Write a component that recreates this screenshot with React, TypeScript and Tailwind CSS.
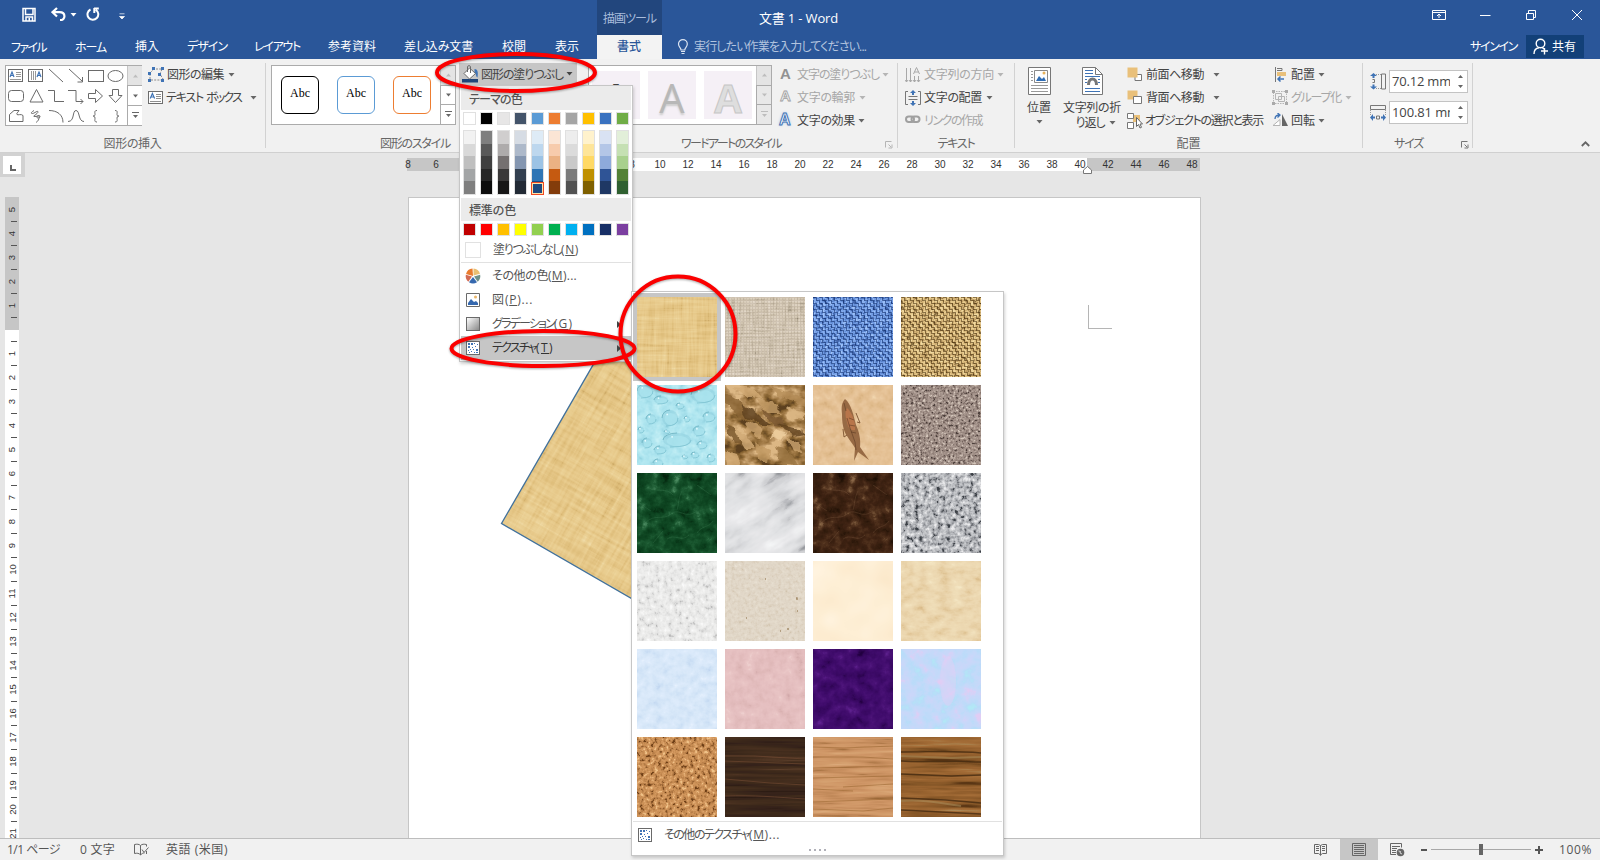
import React, { useLayoutEffect, useRef } from "react";

/* Text that is tracked so that it fills the width given by its class. */
function Label({ className = "", children }: { className?: string; children: React.ReactNode }) {
  const box = useRef<HTMLSpanElement>(null);
  const inner = useRef<HTMLSpanElement>(null);
  useLayoutEffect(() => {
    const b = box.current;
    const i = inner.current;
    if (!b || !i) return;
    i.style.letterSpacing = "0px";
    const n = (i.textContent || "").length;
    const extra = b.getBoundingClientRect().width - i.getBoundingClientRect().width;
    i.style.letterSpacing = `${extra / n}px`;
  }, []);
  return (
    <span ref={box} className={`inline-block shrink-0 whitespace-nowrap leading-[16px] ${className}`}>
      <span ref={inner} className="inline-block">{children}</span>
    </span>
  );
}

function Caret({ className = "text-[#666]" }: { className?: string }) {
  return (
    <svg width="7" height="4" viewBox="0 0 7 4" className={`shrink-0 ${className}`}>
      <path d="M0.500 0h6L3.500 3.500z" fill="currentColor" />
    </svg>
  );
}

/* ---------- textures ---------- */
type Tex = {
  f: string; g?: string; oct?: number; seed: number; k: number; ramp: string[];
};

function channel(ramp: string[], c: number) {
  return ramp.map((h) => (parseInt(h.slice(1 + c * 2, 3 + c * 2), 16) / 255).toFixed(3)).join(" ");
}

function NoiseFilter({ id, t }: { id: string; t: Tex }) {
  const shift = 0.5 - 0.5 * t.k;
  const row = `${t.k} 0 0 0 ${shift}`;
  return (
    <filter id={id} x="0" y="0" width="100%" height="100%" colorInterpolationFilters="sRGB">
      <feTurbulence type="fractalNoise" baseFrequency={t.f} numOctaves={t.oct || 3} seed={t.seed} result="n" />
      <feColorMatrix in="n" type="matrix" values="1 0 0 0 0 1 0 0 0 0 1 0 0 0 0 0 0 0 0 1" result="a" />
      {t.g ? (
        <>
          <feTurbulence type="fractalNoise" baseFrequency={t.g} numOctaves={t.oct || 3} seed={t.seed + 7} />
          <feColorMatrix type="matrix" values="1 0 0 0 0 1 0 0 0 0 1 0 0 0 0 0 0 0 0 1" result="b" />
          <feComposite in="a" in2="b" operator="arithmetic" k1="0" k2="0.5" k3="0.5" k4="0" result="c" />
        </>
      ) : null}
      <feColorMatrix type="matrix" values={`${row} ${row} ${row} 0 0 0 0 1`} />
      <feComponentTransfer>
        <feFuncR type="table" tableValues={channel(t.ramp, 0)} />
        <feFuncG type="table" tableValues={channel(t.ramp, 1)} />
        <feFuncB type="table" tableValues={channel(t.ramp, 2)} />
      </feComponentTransfer>
    </filter>
  );
}

const papyrus: Tex = { f: "0.02 0.3", g: "0.3 0.02", seed: 3, k: 1.5, ramp: ["#c39f5c", "#debd7a", "#e7c98a", "#ecd297", "#f3e0b0"] };

const textures: Tex[] = [
  papyrus,
  { f: "0.05 0.5", g: "0.5 0.05", seed: 5, k: 1.5, ramp: ["#8f8573", "#c4b8a3", "#d8ccb9", "#e0d5c5", "#ece4d6"] },
  { f: "0.3 0.4", g: "0.4 0.3", seed: 9, k: 3, ramp: ["#2a4c94", "#4c78c6", "#6893de", "#7fa8ec", "#a0c4fb"] },
  { f: "0.3 0.4", g: "0.4 0.3", seed: 12, k: 3, ramp: ["#6d5229", "#b38e56", "#d5b373", "#e4c68a", "#f3dca3"] },
  { f: "0.12", seed: 21, k: 1.3, oct: 3, ramp: ["#8ecfdd", "#a3deea", "#afe6f0", "#bbebf3", "#cdf4f8"] },
  { f: "0.05 0.07", seed: 44, k: 2.6, oct: 4, ramp: ["#5c4020", "#83602f", "#a37c48", "#bb9563", "#dcb784"] },
  { f: "0.12", seed: 2, k: 1.1, ramp: ["#d0a777", "#dfba8a", "#e5c195", "#e9c89e", "#f2d7b0"] },
  { f: "0.4", seed: 8, k: 1.9, oct: 2, ramp: ["#4a3e3a", "#8a7972", "#a19088", "#b0a097", "#d6c9bd"] },
  { f: "0.09", seed: 34, k: 1.4, oct: 5, ramp: ["#04240d", "#0b3f1d", "#114a25", "#1d5b33", "#4a8a5f"] },
  { f: "0.02 0.06", seed: 17, k: 1.6, oct: 5, ramp: ["#8f9297", "#cfd0d3", "#e0e1e3", "#e9e9eb", "#f4f5f6"] },
  { f: "0.09", seed: 34, k: 1.4, oct: 5, ramp: ["#1c0e04", "#341d0e", "#3f2313", "#52331e", "#8a6747"] },
  { f: "0.22", seed: 19, k: 1.9, oct: 3, ramp: ["#3c4046", "#94969b", "#b9bbbf", "#cfd0d3", "#ececee"] },
  { f: "0.22 0.18", seed: 23, k: 1.4, oct: 3, ramp: ["#b5b5b5", "#e0e0df", "#ebebea", "#f1f1f0", "#fbfbfb"] },
  { f: "0.3", seed: 26, k: 1.1, oct: 3, ramp: ["#cbbca4", "#dbcfbd", "#e1d7c8", "#e5dccd", "#eee7dc"] },
  { f: "0.03", seed: 4, k: 1.4, oct: 2, ramp: ["#fbe7c8", "#fdecd0", "#feefd5", "#fff2dc", "#fff5e2"] },
  { f: "0.08 0.13", seed: 6, k: 1.1, oct: 4, ramp: ["#d4b27e", "#e5cca0", "#ecd7b0", "#f0deb9", "#f7ebca"] },
  { f: "0.12", seed: 11, k: 1.1, oct: 4, ramp: ["#bfd5f0", "#cfe2f6", "#d8e8f9", "#deecfc", "#eef6ff"] },
  { f: "0.1", seed: 13, k: 1.2, oct: 4, ramp: ["#cda3a5", "#dfb8b8", "#e5bfc0", "#e9c5c5", "#f2d8d6"] },
  { f: "0.09", seed: 15, k: 1.2, oct: 4, ramp: ["#220040", "#370860", "#400c6c", "#4a1276", "#5f2290"] },
  { f: "0.08", seed: 18, k: 1.5, oct: 5, ramp: ["#b2e9f6", "#b9dcf9", "#c3dafa", "#cbd7fa", "#e2cdf4"] },
  { f: "0.28", seed: 22, k: 1.8, oct: 3, ramp: ["#6e3f17", "#b57c46", "#cb9056", "#d69b62", "#f0c288"] },
  { f: "0.008 0.22", seed: 25, k: 1.2, oct: 4, ramp: ["#20130a", "#35221a", "#3e2a1b", "#48301f", "#6a4933"] },
  { f: "0.02 0.22", seed: 27, k: 1.2, oct: 3, ramp: ["#91602f", "#c08858", "#cf9666", "#d5a06f", "#e0b082"] },
  { f: "0.01 0.16", seed: 40, k: 1.6, oct: 4, ramp: ["#5a3615", "#835526", "#97622f", "#a56e38", "#ab8a58"] },
];

const drops: number[][] = [
  [33, 33, 8, 8], [40, 55, 14, 7], [14, 34, 5, 5], [62, 46, 6, 5], [10, 58, 5, 5], [23, 65, 6, 4], [72, 32, 6, 5], [65, 60, 5, 4],
  [8, 6, 8, 7], [24, 15, 7, 4], [66, 10, 12, 8], [43, 21, 4, 3], [21, 78, 5, 4], [50, 34, 3, 3], [58, 70, 4, 3], [74, 73, 4, 4], [4, 45, 3, 3], [48, 72, 3, 2], [30, 47, 3, 2],
];

const creases: [string, string][] = [
  ["0,8 14,16 26,30 20,34 8,26 0,20", "#8a6535"], ["10,2 30,4 38,14 24,12", "#d3ab75"], ["14,18 30,26 44,40 36,40 22,32", "#5a3d1c"],
  ["30,14 48,20 56,28 40,28", "#c79f69"], ["44,2 64,6 80,14 80,20 60,14", "#b58d59"], ["36,24 56,34 62,42 48,40", "#7b5830"],
  ["48,44 62,48 58,56 46,52", "#efd0a0"], ["22,36 38,44 34,52 18,46", "#cda56f"], ["0,40 14,48 20,62 8,58", "#77542a"],
  ["8,44 22,50 30,64 20,64", "#d2ab77"], ["30,58 44,64 42,78 32,74", "#c29a64"], ["52,38 70,42 80,50 70,52", "#5e411f"],
  ["62,50 74,58 80,70 68,64", "#cda671"], ["50,62 62,66 72,80 58,80", "#9a7442"], ["0,66 12,70 16,80 2,80", "#d6ae78"], ["62,22 80,28 80,36 66,34", "#dab582"],
];

const veins = "M45 18c-4 8-3 13-5 19M8 50c10-10 18-2 26-9s14 6 26-3M10 14c8 6 20 0 26 8M60 60c5-8 12-5 16-12M2 30l12 8M30 66c8-6 14 4 22-4M60 12l14 10M16 70l10-12";

function TextureTile({ index }: { index: number }) {
  const id = `tile-${index}`;
  return (
    <svg width="80" height="80" viewBox="0 0 80 80" className="block">
      <defs>
        <NoiseFilter id={id} t={textures[index]} />
        {(index === 2 || index === 3) && (
          <pattern id={`${id}-w`} width="6" height="6" patternUnits="userSpaceOnUse">
            <path d="M0 0.500h3M3 3.500h3" stroke={index === 2 ? "#16336f" : "#4e3613"} strokeWidth="1" opacity="0.6" />
            <path d="M3.500 0v3M0.500 3v3" stroke={index === 2 ? "#16336f" : "#4e3613"} strokeWidth="1" opacity="0.6" />
            <path d="M0 2h3M5 0v3M2 3v3M3 5h3" stroke={index === 2 ? "#97bdf8" : "#f0d79c"} strokeWidth="1" opacity="0.45" />
          </pattern>
        )}
        {index === 1 && (
          <pattern id={`${id}-w`} width="3" height="3" patternUnits="userSpaceOnUse">
            <path d="M0 0.500h3M0.500 0v3" stroke="#8c806c" strokeWidth="1" opacity="0.18" />
          </pattern>
        )}
        {index === 5 && (
          <filter id={`${id}-b`} x="-10%" y="-10%" width="120%" height="120%">
            <feTurbulence type="fractalNoise" baseFrequency="0.08" numOctaves="3" seed="5" />
            <feDisplacementMap in="SourceGraphic" scale="9" xChannelSelector="R" yChannelSelector="G" />
            <feGaussianBlur stdDeviation="0.600" />
          </filter>
        )}
      </defs>
      {index === 9 ? (
        <g transform="rotate(-32 40 40)">
          <rect x="-30" y="-30" width="140" height="140" filter={`url(#${id})`} />
        </g>
      ) : (
        <rect width="80" height="80" filter={`url(#${id})`} />
      )}
      {index >= 1 && index <= 3 && <rect width="80" height="80" fill={`url(#${id}-w)`} />}
      {index === 4 &&
        drops.map(([x, y, rx, ry], i) => (
          <g key={i}>
            <ellipse cx={x} cy={y} rx={rx} ry={ry} fill="#8fd0de" opacity="0.55" />
            <ellipse cx={x + 0.8} cy={y + 1} rx={rx * 0.8} ry={ry * 0.75} fill="#ace5ef" opacity="0.7" />
            <path d={`M${x - rx} ${y}A${rx} ${ry} 0 0 1 ${x} ${y - ry}`} fill="none" stroke="#6fb4c3" strokeWidth="0.9" />
            <path d={`M${x - rx * 0.5} ${y + ry}Q${x + rx} ${y + ry} ${x + rx} ${y}`} fill="none" stroke="#7cc2d0" strokeWidth="0.800" />
            <circle cx={x - rx * 0.35} cy={y - ry * 0.45} r="0.900" fill="#e4fbff" />
          </g>
        ))}
      {index === 5 && (
        <g filter={`url(#${id}-b)`} opacity="0.8">
          {creases.map(([points, fill]) => (
            <polygon key={points} points={points} fill={fill} />
          ))}
        </g>
      )}
      {index === 6 && (
        <g>
          <path d="M32 14c-3 3-4 8-3 15 0 8 1 16 5 22 3 5 6 8 8 12l-1 13 4-9 11 8-9-13c1-7-1-16-4-22-2-8-5-22-11-26z" fill="#8a5a36" opacity="0.85" />
          <path d="M34 23c5 4 9 15 8 22-4 1-7-2-8-8-2-6-2-11 0-14z" fill="#b8754a" />
          <path d="M31 18l2 8M34 33l3 10 5 14 1 8M36 33l5 2M36 40l6 1M38 47l5 1" stroke="#5c3a22" strokeWidth="0.7" fill="none" opacity="0.8" />
          <path d="M43 28l4 10-3-1M30 44l1 8 3-2" stroke="#7c5230" fill="none" strokeWidth="0.900" />
        </g>
      )}
      {index === 8 && <path d={veins} stroke="#4f9166" strokeWidth="0.6" fill="none" opacity="0.4" />}
      {index === 10 && <path d={veins} stroke="#94704f" strokeWidth="0.6" fill="none" opacity="0.4" />}
      {index === 13 && <path d="M40 18h1M71 37h1v2M72 50h1M21 57h1M55 70h1M62 68h2" stroke="#8c6d45" strokeWidth="1.4" fill="none" opacity="0.7" />}
      {index === 19 && <ellipse cx="47" cy="32" rx="8" ry="25" fill="#e0cff6" opacity="0.5" />}
      {index === 21 && <path d="M0 19h30l50 3M0 24l80 3M0 42l45 4 35 2M0 59c30-1 50 1 80 3" stroke="#6b4630" strokeWidth="0.9" fill="none" opacity="0.8" />}
      {index === 22 && <path d="M0 10l30 1 50-2M0 20h50l30 2M0 31l80-2M0 41l80-2M30 50l50-3M0 52l40 2M0 65l80-3M0 72l50 2 30-3" stroke="#9c6834" strokeWidth="0.900" fill="none" opacity="0.65" />}
      {index === 23 && <path d="M0 15c30 0 50-2 80 1M0 24c25 2 50-1 80 1M0 37l50 2 30-1M0 61l45 2 35 3M0 73l80 4" stroke="#3b230d" strokeWidth="1.4" fill="none" opacity="0.7" />}
      {index === 23 && <path d="M0 19l50 2 30-1M0 64c20-2 40 2 60 5" stroke="#a98f5e" strokeWidth="2" fill="none" opacity="0.5" />}
    </svg>
  );
}

/* ---------- small icons ---------- */
function TextureIcon() {
  return (
    <svg width="14" height="14" viewBox="0 0 14 14" className="shrink-0">
      <rect x="0.5" y="0.5" width="13" height="13" fill="#fff" stroke="#6a6a6a" />
      <path d="M2 2h2v2H2zM5 2h2v2H5zM2 5h2v2H2zM8 2h1v1H8zM11 3h1v1h-1zM6 6h1v1H6zM9 5h1v1H9zM2 9h1v1H2zM4 8h1v1H4zM7 8h1v1H7zM10 8h2v2h-2zM3 11h1v1H3zM5 10h1v1H5zM8 11h1v1H8zM10 11h2v1h-2z" fill="#3f73b5" />
    </svg>
  );
}

function TextBoxIcon() {
  return (
    <svg width="15" height="13" viewBox="0 0 15 13" className="shrink-0">
      <rect x="0.5" y="0.5" width="14" height="12" fill="#fff" stroke="#6d6d6d" />
      <path d="M2.2 7.5L4.4 2.5l2.2 5M3 6h2.8" stroke="#3f73b5" strokeWidth="1.2" fill="none" />
      <path d="M8 3.5h5M8 5.5h5M8 7.5h5M2 10.5h11" stroke="#8f8f8f" />
    </svg>
  );
}

function Launcher({ className = "text-[#777]" }: { className?: string }) {
  return (
    <svg width="8" height="8" viewBox="0 0 8 8" className={`shrink-0 ${className}`}>
      <path d="M0.5 6.5V0.5H6.5M3.5 3.5l2.5 2.5M7 3.5V7H3.5" fill="none" stroke="currentColor" />
    </svg>
  );
}

function GalleryScroll({ disabled = false }: { disabled?: boolean }) {
  const c = disabled ? "#bdbdbd" : "#666";
  return (
    <div className="flex w-[15px] shrink-0 flex-col">
      <div className="flex flex-1 items-center justify-center border-l border-[#c6c6c6] bg-[#e4e4e4]">
        <svg width="7" height="4"><path d="M3.5 0.5L6 3.5H1z" fill="#bdbdbd" /></svg>
      </div>
      <div className={`flex flex-1 items-center justify-center border-l border-t border-[#ababab] ${disabled ? "bg-[#e8e8e8]" : "bg-white"}`}>
        <svg width="7" height="4"><path d="M3.5 3.5L6 0.5H1z" fill={c} /></svg>
      </div>
      <div className={`flex flex-1 items-center justify-center border-l border-t border-[#ababab] ${disabled ? "bg-[#e8e8e8]" : "bg-white"}`}>
        <svg width="7" height="7"><path d="M0 0.5h7" stroke={c} /><path d="M3.5 6L6 3H1z" fill={c} /></svg>
      </div>
    </div>
  );
}

/* ---------- title bar ---------- */
function TitleBar() {
  return (
    <header className="flex h-[59px] w-[1600px] shrink-0 flex-col bg-[#2a5699] text-[12px] text-white">
      <div className="flex h-[35px] shrink-0">
        <div className="flex w-[597px] items-start pt-[7px]">
          <svg width="14" height="15" viewBox="0 0 14 15" className="ml-[22px]">
            <path d="M1 1.5h12v12.500H1zM3.500 1.500v6h7.500v-6M4 14v-4h6.500v4" fill="none" stroke="#fff" strokeWidth="1.5" />
            <path d="M6.500 11h1.500v3H6.500z" fill="#fff" />
          </svg>
          <svg width="15" height="14" viewBox="0 0 15 14" className="ml-[15px]">
            <path d="M6 1L1.500 5.200 6 9.500M2 5.200h6.500c6.500 0 6.500 8 0.500 8" fill="none" stroke="#fff" strokeWidth="2.200" />
          </svg>
          <Caret className="ml-[4px] mt-[6px] text-white" />
          <svg width="14" height="15" viewBox="0 0 14 15" className="ml-[9px]">
            <path d="M4.500 2.500A5.400 5.400 0 1 0 9.800 2.800M8 1.500h4.800M8.300 1v5" fill="none" stroke="#fff" strokeWidth="2" />
          </svg>
          <svg width="6" height="7" viewBox="0 0 6 7" className="ml-[19px] mt-[6px]">
            <path d="M0.500 0.800h5M0.500 3.500h5L3 6z" fill="#fff" stroke="#fff" strokeWidth="0.700" />
          </svg>
        </div>
        <div className="flex w-[65px] items-center bg-[#22467d] pl-[6px] pt-[3px] text-[#a9bcdb]">
          <Label className="w-[53px]">描画ツール</Label>
        </div>
        <div className="flex flex-1 items-center pl-[97px] text-[13px]">
          <Label className="w-[79px]">文書 1 - Word</Label>
        </div>
        <div className="flex w-[168px] pt-[9px]">
          <svg width="14" height="12" viewBox="0 0 14 12"><path d="M0.500 1.500h13v9H0.500zM0.500 3.500h13M7 9V5M5 7l2-2 2 2" fill="none" stroke="#fff" /></svg>
          <svg width="11" height="12" viewBox="0 0 11 12" className="ml-[34px]"><path d="M0 6.500h10.500" stroke="#fff" /></svg>
          <svg width="11" height="12" viewBox="0 0 11 12" className="ml-[35px]"><path d="M0.500 4.500h7v6h-7zM2.500 4V1.500h7v7H8" fill="none" stroke="#fff" /></svg>
          <svg width="12" height="12" viewBox="0 0 12 12" className="ml-[34px]"><path d="M1 1l10 10M11 1L1 11" stroke="#fff" /></svg>
        </div>
      </div>
      <div className="flex h-[24px] items-center">
        <Label className="ml-[11px] w-[35px] pt-px">ファイル</Label>
        <Label className="ml-[29px] w-[31px] pt-px">ホーム</Label>
        <Label className="ml-[29px] w-[24px]">挿入</Label>
        <Label className="ml-[28px] w-[40px]">デザイン</Label>
        <Label className="ml-[27px] w-[46px]">レイアウト</Label>
        <Label className="ml-[28px] w-[48px]">参考資料</Label>
        <Label className="ml-[28px] w-[69px]">差し込み文書</Label>
        <Label className="ml-[29px] w-[24px]">校閲</Label>
        <Label className="ml-[29px] w-[24px]">表示</Label>
        <div className="ml-[18px] flex h-full w-[65px] items-center justify-center bg-[#f3f3f3] pr-px font-medium text-[#2a5699]">
          <Label className="w-[24px]">書式</Label>
        </div>
        <svg width="12" height="16" viewBox="0 0 12 16" className="ml-[15px] mr-[5px] shrink-0">
          <path d="M4 11C4 8.500 1.500 8 1.500 5a4.300 4.300 0 0 1 8.800 0C10.300 8 7.800 8.500 7.800 11zM4 12.500h4M4.500 14.500h3" fill="none" stroke="#dbe4f2" strokeWidth="1.200" />
        </svg>
        <Label className="w-[172px] text-[#b3c4df]">実行したい作業を入力してください...</Label>
        <div className="flex-1" />
        <Label className="w-[47px]">サインイン</Label>
        <div className="ml-[9px] mr-[16px] flex h-[23px] w-[58px] items-center self-start bg-[#124078] pl-[7px]">
          <svg width="16" height="17" viewBox="0 0 16 17" className="mr-[3px]">
            <circle cx="7.500" cy="5.500" r="4.300" fill="none" stroke="#fff" strokeWidth="1.400" />
            <path d="M1 16c0-4 2.500-6 5-6.300M9 9.500c1 0.300 1.500 1 2 1.500M8 13h7M11.500 10v6.500" fill="none" stroke="#fff" strokeWidth="1.400" />
          </svg>
          <Label className="w-[24px]">共有</Label>
        </div>
      </div>
    </header>
  );
}

/* ---------- ribbon ---------- */
function Group({ className, children }: { className: string; children: React.ReactNode }) {
  return <section className={`flex shrink-0 flex-col ${className}`}>{children}</section>;
}
function Body({ children }: { children: React.ReactNode }) {
  return <div className="flex h-[74px] shrink-0 items-start pt-[4px]">{children}</div>;
}
function Sep() {
  return <div className="mt-[4px] h-[85px] w-px shrink-0 bg-[#d2d2d2]" />;
}
const rowCls = "flex h-[23px] items-center";

function ShapeGallery() {
  return (
    <div className="ml-[5px] mt-[2px] flex h-[61px] w-[137px] shrink-0 border border-[#ababab] bg-white">
      <svg width="121" height="59" viewBox="6 66 121 59" className="shrink-0" fill="none" stroke="#6a6a6a">
        <rect x="8.500" y="69.500" width="14" height="12" />
        <path d="M10 77l2-5 2 5M11 75.500h2.500" stroke="#3f73b5" strokeWidth="1.200" />
        <path d="M16 72.500h5M16 74.500h5M16 76.500h5M10 79.500h11" stroke="#999" />
        <rect x="28.500" y="69.500" width="14" height="12" />
        <path d="M31.500 71v9M33.500 71v9M35.500 71v9" stroke="#999" /><path d="M37 77l2-5 2 5M38 75.500h2.500" stroke="#3f73b5" strokeWidth="1.200" />
        <path d="M49 69l14 13M69 69l13 12M82.500 77v5H77.500" />
        <rect x="88.500" y="70.500" width="15" height="11" /><ellipse cx="115.500" cy="76" rx="7.500" ry="5.500" />
        <rect x="8.500" y="90.500" width="15" height="11" rx="3" /><path d="M36.500 89.500l6.500 12.500H30z" />
        <path d="M48 90.500h6.500v11H64M68 90.500h8v11h7M80.500 99l2.500 2.500-2.500 2.500" />
        <path d="M88.500 93.500h7v-4l7 6.500-7 6.500v-4h-7zM112.500 89.500h6v6h3.500l-6.500 7-6.500-7h3.500z" />
        <path d="M9.500 121.500v-7l4.500-4h5c-1 2-3 3-2 4s4-1 6 1v6zM34 110.500c-5 3-2 4 1 2s4-1 2 1-5 3-2 3 5-2 5 0-4 2-3 0 3-1 2 2-2 3-3 4" />
        <path d="M49 110.500c8 0 14 4 14 12M68 121.500c7 0 4-11 8-11s2 11 8 11M97 110.500c-3 0-2 2-2 4s-2 1.500-2 1.500 2 0 2 2-1 4 2 4M115 110.500c3 0 2 2 2 4s2 1.500 2 1.500-2 0-2 2 1 4-2 4" />
      </svg>
      <GalleryScroll />
    </div>
  );
}

function SizeInput({ value, w }: { value: string; w: string }) {
  return (
    <div className="flex h-[23px] w-[79px] items-center border border-[#c3c3c3] bg-white pl-[2px]">
      <div className="w-[58px] overflow-hidden whitespace-nowrap text-[#444]">
        <Label className={`text-[13px] ${w}`}>{value}</Label>
      </div>
      <svg width="7" height="15" viewBox="0 0 7 15" className="ml-[7px] shrink-0"><path d="M3.500 1L6 4H1zM3.500 14L6 11H1z" fill="#666" /></svg>
    </div>
  );
}

function Ribbon() {
  return (
    <div className="flex h-[94px] w-[1600px] shrink-0 border-b border-[#d0d0d0] bg-[#f1f1f1] text-[12px] text-[#444]">
      <Group className="w-[265px]">
        <Body>
          <ShapeGallery />
          <div className="ml-[6px]">
            <div className={rowCls}>
              <svg width="16" height="15" viewBox="0 0 16 15" className="mr-[3px]">
                <path d="M2 12V6l4-4M8 2h6L12 7l3 5M3 13h10" fill="none" stroke="#8a8a8a" strokeDasharray="2 1.200" />
                <path d="M4 0h3v3H4zM13 0h3v3h-3zM0 5h3v3H0zM10 6h3v3h-3zM0 12h3v3H0zM13 12h3v3h-3z" fill="#3f73b5" />
              </svg>
              <Label className="mr-[4px] w-[57px]">図形の編集</Label><Caret />
            </div>
            <div className={rowCls}>
              <TextBoxIcon /><Label className="ml-[3px] w-[37px]">テキスト</Label><Label className="ml-[3px] mr-[9px] w-[35px]">ボックス</Label><Caret />
            </div>
          </div>
        </Body>
        <div className="text-center text-[#666]"><Label className="mt-[3px] w-[58px]">図形の挿入</Label></div>
      </Group>
      <Sep />
      <Group className="w-[322px]">
        <Body>
          <div className="ml-[5px] mt-[2px] flex h-[60px] w-[185px] shrink-0 border border-[#ababab] bg-white">
            <div className="flex flex-1 items-start gap-[18px] pl-[9px] pt-[10px] font-['Liberation_Serif',serif] text-[12px] text-black">
              <div className="flex h-[38px] w-[38px] justify-center rounded-[6px] border border-black pt-[8px] leading-[16px]">Abc</div>
              <div className="flex h-[38px] w-[38px] justify-center rounded-[6px] border border-[#5b9bd5] pt-[8px] leading-[16px]">Abc</div>
              <div className="flex h-[38px] w-[38px] justify-center rounded-[6px] border border-[#ed7d31] pt-[8px] leading-[16px]">Abc</div>
            </div>
            <GalleryScroll />
          </div>
          <div className="ml-[3px] flex h-[22px] w-[118px] items-center bg-[#c6c6c6] pl-[3px]">
            <svg width="17" height="18" viewBox="0 0 17 18" className="mr-[2px]">
              <path d="M0 14h16v3.500H0z" fill="#1f4579" />
              <path d="M12.500 4c4 0 3.500 5 3 8.500-2-1-1-4-3-4.500z" fill="#3f73b5" />
              <path d="M7.500 3l6 5.500-6 5.500L2 8.500z" fill="#fff" stroke="#6a6a6a" /><path d="M5.500 7V1.500c0-1 3-1 3 0V8" fill="none" stroke="#6a6a6a" />
            </svg>
            <Label className="mr-[3px] w-[82px] pt-[2px]">図形の塗りつぶし</Label><Caret className="text-[#444]" />
          </div>
        </Body>
        <Label className="ml-[114px] mt-[3px] w-[70px] text-[#666]">図形のスタイル</Label>
      </Group>
      <Group className="w-[309px]">
        <Body>
          <div className="mt-[2px] flex h-[60px] w-[184px] shrink-0 border border-[#ababab] bg-white">
            <div className="flex flex-1 gap-[8px] pl-[3px] pt-[5px] font-['Open_Sans',sans-serif] text-[40px] leading-[51px]">
              <div className="h-[48px] w-[48px] bg-[#f5f0f6] pt-px text-center font-semibold text-[#444]">A</div>
              <div className="h-[48px] w-[48px] bg-[#f5f0f6] pt-px text-center font-medium text-[#b8b8b8] [text-shadow:0_2px_2px_#ccc]">A</div>
              <div className="h-[48px] w-[48px] bg-[#f5f0f6] pt-px text-center font-bold text-[#dedede] [-webkit-text-stroke:1px_#c6c6c6]">A</div>
            </div>
            <GalleryScroll disabled />
          </div>
          <div className="ml-[6px]">
            <div className={`${rowCls} text-[#a6a6a6]`}>
              <span className="w-[19px] pb-[3px] pl-[2px] font-['Liberation_Sans',sans-serif] text-[15px] font-bold leading-[15px] text-[#929292]">A</span>
              <Label className="mr-[3px] w-[82px]">文字の塗りつぶし</Label><Caret className="text-[#b5b5b5]" />
            </div>
            <div className={`${rowCls} text-[#a6a6a6]`}>
              <span className="w-[19px] pb-[5px] pl-[2px] font-['Liberation_Sans',sans-serif] text-[15px] font-bold leading-[15px] text-[#f1f1f1] [-webkit-text-stroke:0.8px_#a0a0a0]">A</span>
              <Label className="mr-[4px] w-[58px]">文字の輪郭</Label><Caret className="text-[#b5b5b5]" />
            </div>
            <div className={rowCls}>
              <span className="w-[19px] pb-[3px] pl-[1px] font-['Liberation_Sans',sans-serif] text-[16px] font-bold leading-[15px] text-white [-webkit-text-stroke:1px_#3f73b5] [text-shadow:0_0_3px_#8db4e8]">A</span>
              <Label className="mr-[3px] w-[58px]">文字の効果</Label><Caret />
            </div>
          </div>
        </Body>
        <div className="flex items-center text-[#666]"><Label className="ml-[93px] mr-[104px] mt-[3px] w-[100px]">ワードアートのスタイル</Label><Launcher className="mt-[4px] text-[#b5b5b5]" /></div>
      </Group>
      <Sep />
      <Group className="w-[116px]">
        <Body>
          <div className="ml-[7px]">
            <div className={`${rowCls} text-[#a6a6a6]`}>
              <svg width="16" height="16" viewBox="0 0 16 16" className="mr-[3px] shrink-0"><path d="M1.500 1v14M5.500 1v14M9.500 9v6M13.500 9v6M0 13l1.500 2L3 13M4 13l1.500 2L7 13M8 13l1.500 2 1.500-2M12 13l1.500 2 1.500-2M8.500 7L11.500 0.500 14.500 7M9.500 5h4" fill="none" stroke="#a8a8a8" /></svg>
              <Label className="mr-[3px] w-[70px]">文字列の方向</Label><Caret className="text-[#b5b5b5]" />
            </div>
            <div className={rowCls}>
              <svg width="16" height="16" viewBox="0 0 16 16" className="mr-[3px] shrink-0"><path d="M3 1.500H0.500v13H3M13 1.500h2.500v13H13M3.500 6.500h9M3.500 9.500h9" fill="none" stroke="#777" /><path d="M8 0l3 3H9v2H7V3H5zM8 16l3-3H9v-2H7v2H5z" fill="#3f73b5" /></svg>
              <Label className="mr-[4px] w-[58px]">文字の配置</Label><Caret />
            </div>
            <div className={`${rowCls} text-[#a6a6a6]`}>
              <svg width="16" height="9" viewBox="0 0 16 9" className="mb-[3px] mr-[3px] shrink-0"><rect x="1" y="1.500" width="8" height="5.500" rx="2.700" fill="none" stroke="#a0a0a0" strokeWidth="2" /><rect x="6.500" y="1.500" width="8" height="5.500" rx="2.700" fill="none" stroke="#a0a0a0" strokeWidth="2" /></svg>
              <Label className="w-[58px]">リンクの作成</Label>
            </div>
          </div>
        </Body>
        <div className="text-center text-[#666]"><Label className="mt-[3px] w-[37px]">テキスト</Label></div>
      </Group>
      <Sep />
      <Group className="w-[347px]">
        <Body>
          <div className="ml-[12px] flex w-[24px] flex-col items-center pt-[4px]">
            <svg width="23" height="28" viewBox="0 0 23 28"><path d="M0.500 0.500h22v27H0.500z" fill="#fff" stroke="#777" /><path d="M6.500 3.500h13v12h-13z" fill="#fff" stroke="#8a8a8a" /><path d="M8 14l3-5 3 3 2-2 2 4z" fill="#2f6db5" /><circle cx="16" cy="6" r="1.500" fill="#e8b25a" /><path d="M3 4.500h2M3 7.500h2M3 10.500h2M3 13.500h2M3 18.500h17M3 21.500h17M3 24.500h17" stroke="#999" /></svg>
            <Label className="mt-[5px] w-[24px]">位置</Label>
            <Caret className="mt-[4px] text-[#666]" />
          </div>
          <div className="ml-[12px] flex w-[58px] flex-col items-center pt-[4px]">
            <svg width="21" height="28" viewBox="0 0 21 28"><path d="M0.500 0.500h13l7 7v20h-20z" fill="#fff" stroke="#777" /><path d="M13.500 0.500v7h7" fill="none" stroke="#777" /><path d="M3 3.500h8M3 6.500h8M3 9.500h15M3 12.500h2M16 12.500h2M3 15.500h2M16 15.500h2M3 21.500h15M3 24.500h15" stroke="#3f73b5" /><path d="M6.500 18c0-8 8-8 8 0" fill="none" stroke="#777" strokeWidth="3" /></svg>
            <Label className="mt-[5px] w-[58px]">文字列の折</Label>
            <div className="-mt-px flex items-center pl-[7px]"><Label className="mr-[4px] w-[29px]">り返し</Label><Caret /></div>
          </div>
          <div className="ml-[6px] w-[145px]">
            <div className={rowCls}>
              <svg width="16" height="15" viewBox="0 0 16 15" className="mr-[3px] shrink-0"><path d="M8 7.500h6.500v6H8z" fill="#fff" stroke="#777" /><path d="M0.500 0.500h10v10h-10z" fill="#e9c07a" /></svg>
              <Label className="mr-[9px] w-[58px]">前面へ移動</Label><Caret />
            </div>
            <div className={rowCls}>
              <svg width="16" height="15" viewBox="0 0 16 15" className="mr-[3px] shrink-0"><path d="M0.500 0.500h10v9h-10z" fill="#e9c07a" /><path d="M6.500 6.500h8v7h-8z" fill="#fff" stroke="#777" /></svg>
              <Label className="mr-[9px] w-[58px]">背面へ移動</Label><Caret />
            </div>
            <div className={rowCls}>
              <svg width="16" height="16" viewBox="0 0 16 16" className="mr-[2px] shrink-0"><path d="M6 2h7v7H6z" fill="#e9c07a" /><path d="M0.500 0.500h6v5h-6zM0.500 9.500h6v6h-6z" fill="#fff" stroke="#777" /><path d="M9.500 4.500v9l2-2 1.500 3.500 1.500-0.700L13 11h2.500z" fill="#fff" stroke="#666" /></svg>
              <Label className="w-[118px]">オブジェクトの選択と表示</Label>
            </div>
          </div>
          <div>
            <div className={rowCls}>
              <svg width="16" height="15" viewBox="0 0 16 15" className="mr-[3px] shrink-0"><path d="M3.500 0v15M5 1.500h5v2H5" fill="none" stroke="#777" /><path d="M5 5h9v4H5z" fill="#e9c07a" /><path d="M12 12H6M8.500 9.500L6 12l2.500 2.500" fill="none" stroke="#3f73b5" strokeWidth="1.500" /></svg>
              <Label className="mr-[3px] w-[24px]">配置</Label><Caret />
            </div>
            <div className={`${rowCls} text-[#a6a6a6]`}>
              <svg width="16" height="15" viewBox="0 0 16 15" className="mr-[3px] shrink-0" fill="none" stroke="#b5b5b5"><path d="M1.500 1.500h13v12h-13z" strokeDasharray="1.500 1" /><path d="M3.500 3.500h6v6h-6zM6.500 6.500h6v5h-6z" /><path d="M0 0h3v3H0zM13 0h3v3h-3zM0 12h3v3H0zM13 12h3v3h-3z" fill="#aaa" stroke="none" /></svg>
              <Label className="mr-[4px] w-[50px]">グループ化</Label><Caret className="text-[#b5b5b5]" />
            </div>
            <div className={rowCls}>
              <svg width="16" height="15" viewBox="0 0 16 15" className="mr-[3px] shrink-0"><path d="M10 1v12h6z" fill="#666" /><path d="M8 6.500v6H1z" fill="#fff" stroke="#b5b5b5" /><path d="M3 6c0-3 2-4 4.500-4M5.500 0l2.500 2-2.500 2.500" fill="none" stroke="#3f73b5" strokeWidth="1.300" /></svg>
              <Label className="mr-[3px] w-[24px]">回転</Label><Caret />
            </div>
          </div>
        </Body>
        <div className="text-center text-[#666]"><Label className="mt-[3px] w-[24px]">配置</Label></div>
      </Group>
      <Sep />
      <Group className="w-[109px]">
        <Body>
          <div className="ml-[7px] mt-[7px] flex flex-col gap-[8px]">
            <div className="flex items-center gap-[3px]">
              <svg width="16" height="17" viewBox="0 0 16 17"><path d="M11.500 1h4v15h-4zM2.500 6.500h2v3h-2" fill="none" stroke="#777" /><path d="M6 1.500h5M6 15.500h5" stroke="#999" strokeDasharray="1 1" /><path d="M3.500 0L7 3H4.500v2h-2V3H0zM3.500 16.500L7 13.500H4.500v-2h-2v2H0z" fill="#3f73b5" /></svg>
              <SizeInput value="70.12 mm" w="w-[59px]" />
            </div>
            <div className="flex items-center gap-[3px]">
              <svg width="16" height="17" viewBox="0 0 16 17"><path d="M0.500 1.500h15v4H0.500zM6.500 12h3v3h-3z" fill="none" stroke="#777" /><path d="M0.500 6v5M15.500 6v5" stroke="#999" strokeDasharray="1 1" /><path d="M0 13.500L3 10v2.500h2v2H3V17zM16 13.500L13 10v2.500h-2v2h2V17z" fill="#3f73b5" /></svg>
              <SizeInput value="100.81 mm" w="w-[67px]" />
            </div>
          </div>
        </Body>
        <div className="flex items-center text-[#666]"><Label className="ml-[31px] mr-[38px] mt-[3px] w-[29px]">サイズ</Label><Launcher className="mt-[4px] text-[#777]" /></div>
      </Group>
      <Sep />
      <div className="flex flex-1 items-end justify-end pb-[5px] pr-[10px]">
        <svg width="9" height="6" viewBox="0 0 9 6"><path d="M0.800 5l3.700-3.700L8.200 5" fill="none" stroke="#666" strokeWidth="1.800" /></svg>
      </div>
    </div>
  );
}

/* ---------- document area ---------- */
const hNumbers = [8, 6, 4, 2, 0, 2, 4, 6, 8, 10, 12, 14, 16, 18, 20, 22, 24, 26, 28, 30, 32, 34, 36, 38, 40, 42, 44, 46, 48];
const vNumbers = [5, 4, 3, 2, 1, 0, 1, 2, 3, 4, 5, 6, 7, 8, 9, 10, 11, 12, 13, 14, 15, 16, 17, 18, 19, 20, 21];

function Workspace() {
  return (
    <main className="flex h-[685px] w-[1600px] shrink-0 flex-col overflow-hidden bg-[#e6e6e6]">
      <div className="flex h-[44px] shrink-0">
        <div className="flex h-[24px] w-[25px] items-center justify-center bg-[#d2d2d2] pr-px">
          <div className="flex h-[18px] w-[18px] items-end justify-end bg-white pb-[3px] pr-[5px]">
            <div className="h-[6px] w-[6px] border-b-2 border-l-2 border-[#666]" />
          </div>
        </div>
        <div className="relative ml-[382px] mt-[5px] flex h-[13px] w-[793px]">
          <div className="w-[113px] bg-[#c6c6c6]" />
          <div className="w-[567px] bg-white" />
          <div className="flex-1 bg-[#c6c6c6]" />
          <div className="absolute -left-[13px] top-0 flex font-['Liberation_Sans',sans-serif] text-[10px] leading-[14px] text-[#333]">
            {hNumbers.map((n, i) => (
              <span key={i} className="w-[28px] shrink-0 text-center">{n || ""}</span>
            ))}
          </div>
          <svg width="9" height="8" viewBox="0 0 9 8" className="absolute left-[676px] top-[8px]"><path d="M0.500 7.500V4L4.500 0.500 8.500 4v3.500z" fill="#fff" stroke="#777" /></svg>
        </div>
      </div>
      <div className="flex flex-1 items-start">
        <div className="relative ml-[5px] h-[641px] w-[14px] shrink-0 overflow-hidden bg-white">
          <div className="h-[133px] bg-[#c6c6c6]" />
          <div className="absolute left-0 top-px flex flex-col font-['Liberation_Sans',sans-serif] text-[9.500px] text-[#333]">
            {vNumbers.map((n, i) => (
              <div key={i} className="flex h-[24px] w-[14px] shrink-0 flex-col items-center">
                <span className="flex h-[24px] -rotate-90 items-center pt-px leading-[10px]">{n || ""}</span>
                <span className="ml-[4px] h-px w-[6px] shrink-0 bg-[#555]" />
              </div>
            ))}
          </div>
        </div>
        <div className="relative ml-[389px] h-[660px] w-[793px] shrink-0 border border-[#c6c6c6] bg-white">
          <svg width="420" height="480" viewBox="409 198 420 480" className="absolute left-0 top-0">
            <defs><NoiseFilter id="shape-fill" t={papyrus} /></defs>
            <g transform="translate(501.500 523.500) rotate(30)">
              <rect x="0" y="-265" width="381" height="265" filter="url(#shape-fill)" />
              <rect x="0" y="-265" width="381" height="265" fill="none" stroke="#41719c" strokeWidth="1.300" />
            </g>
          </svg>
          <div className="absolute left-[679px] top-[107px] h-[24px] w-[24px] border-b border-l border-[#b5b5b5]" />
        </div>
      </div>
    </main>
  );
}

function StatusBar() {
  return (
    <footer className="flex h-[22px] w-[1600px] shrink-0 items-center border-t border-[#bdbdbd] bg-[#f1f1f1] text-[12px] text-[#555]">
      <Label className="ml-[7px] w-[53px]">1/1 ページ</Label>
      <Label className="ml-[20px] w-[35px]">0 文字</Label>
      <svg width="15" height="13" viewBox="0 0 15 13" className="ml-[19px]"><path d="M6.500 2.500C5 1 3 1 0.500 1.500v9c2.500-0.500 4.500-0.500 6 1.500V2.500C8 1 10 1 12.500 1.500v2M6.500 12c1-1.500 2.500-2 4-2M8 6.500l2 3 4.500-5M12.500 8v3" fill="none" stroke="#666" /></svg>
      <Label className="ml-[17px] w-[62px]">英語 (米国)</Label>
      <div className="flex-1" />
      <svg width="13" height="13" viewBox="0 0 13 13"><path d="M0.500 1.500h4l2 1 2-1h4v9h-4l-2 1.500-2-1.500h-4zM6.500 2.500v10M2 3.500h3M2 5.500h3M2 7.500h3M8 3.500h3M8 5.500h3M8 7.500h3" fill="none" stroke="#666" /></svg>
      <div className="ml-[13px] flex h-full w-[38px] items-center justify-center bg-[#c6c6c6]">
        <svg width="14" height="13" viewBox="0 0 14 13"><path d="M0.500 0.500h13v12H0.500zM2 2.500h10M2 4.500h10M2 6.500h10M2 8.500h10M2 10.500h10" fill="none" stroke="#666" /></svg>
      </div>
      <svg width="15" height="14" viewBox="0 0 15 14" className="ml-[12px]"><path d="M6 11.500H0.500v-11h11v4M2 3.500h8M2 5.500h5M2 7.500h4M2 9.500h4" fill="none" stroke="#666" /><circle cx="10.500" cy="9.500" r="3.800" fill="#666" /><path d="M8.500 8l2 0.500-0.500 1.500 2 1" stroke="#f1f1f1" fill="none" strokeWidth="0.800" /></svg>
      <div className="ml-[16px] h-[2px] w-[6px] bg-[#555]" />
      <div className="ml-[4px] flex h-[11px] w-[100px] items-center justify-center bg-[linear-gradient(#a8a8a8,#a8a8a8)] bg-[length:100%_1px] bg-center bg-no-repeat">
        <div className="h-[11px] w-[4px] bg-[#666]" />
      </div>
      <svg width="8" height="8" viewBox="0 0 8 8" className="ml-[4px]"><path d="M0 4h8M4 0v8" stroke="#555" strokeWidth="2" /></svg>
      <Label className="ml-[16px] mr-[8px] w-[33px]">100%</Label>
    </footer>
  );
}

/* ---------- fill menu ---------- */
const theme = ["#ffffff", "#000000", "#e7e6e6", "#44546a", "#5b9bd5", "#ed7d31", "#a5a5a5", "#ffc000", "#3a72c0", "#70ad47"];
const shades = [
  ["#f2f2f2", "#d9d9d9", "#bfbfbf", "#a3a5a6", "#7f7f7f"],
  ["#7f7f7f", "#595959", "#3f3f3f", "#262626", "#0c0c0c"],
  ["#d0cece", "#aeabab", "#757070", "#3a3838", "#171616"],
  ["#d6dce4", "#adb9ca", "#8496b0", "#323f4f", "#222a35"],
  ["#deebf6", "#bdd7ee", "#9cc3e5", "#2e75b5", "#1f4a80"],
  ["#fbe5d5", "#f7cbac", "#ebb183", "#c55a11", "#833c0b"],
  ["#ededed", "#dbdbdb", "#c9c9c9", "#7b7b7b", "#525252"],
  ["#fff2cc", "#fee599", "#ffd965", "#bf9000", "#7f6000"],
  ["#d9e2f3", "#b4c6e7", "#8eaadb", "#2f5496", "#1f3864"],
  ["#e2efd9", "#c5e0b3", "#a8d08d", "#538135", "#2f6030"],
];
const standard = ["#c00000", "#ff0000", "#ffc000", "#ffff00", "#92d050", "#00b050", "#00b0f0", "#0070c0", "#172f66", "#7b3fa0"];

function Swatches({ colors }: { colors: string[] }) {
  return (
    <div className="flex gap-[4px] pl-[2px]">
      {colors.map((c) => (
        <div key={c} className="h-[13px] w-[13px] border border-[#e0e0e0]" style={{ backgroundColor: c }} />
      ))}
    </div>
  );
}

function FillMenu() {
  return (
    <div className="absolute left-[459px] top-[85px] flex h-[277px] w-[174px] flex-col border border-[#c6c6c6] bg-white px-px text-[12px] text-[#555] shadow-[1px_2px_3px_rgba(0,0,0,0.18)]">
      <div className="flex h-[24px] shrink-0 items-center bg-[#ebebeb] pl-[8px] pt-[3px] font-medium"><Label className="w-[53px]">テーマの色</Label></div>
      <div className="mt-[2px]"><Swatches colors={theme} /></div>
      <div className="mt-[5px] flex gap-[4px] pl-[2px]">
        {shades.map((col, i) => (
          <div key={i} className="flex h-[65px] w-[13px] flex-col border border-[#e0e0e0]">
            {col.map((c) => (
              <div key={c} className="flex-1" style={{ backgroundColor: c }} />
            ))}
            {i === 4 && <div className="-mx-px -mb-px -mt-[12px] h-[13px] shrink-0 border border-[#ef4a23] p-0 shadow-[inset_0_0_0_1px_#ffe2a8]" />}
          </div>
        ))}
      </div>
      <div className="mt-[3px] flex h-[23px] shrink-0 items-center bg-[#ebebeb] pl-[8px] pt-[2px] font-medium"><Label className="w-[47px]">標準の色</Label></div>
      <div className="mt-[2px]"><Swatches colors={standard} /></div>
      <div className="flex h-[27px] shrink-0 items-center border-b border-[#e1e1e1] pl-[4px] pt-[2px]">
        <div className="mr-[12px] h-[16px] w-[16px] border border-[#e1e1e1]" />
        <Label className="w-[68px]">塗りつぶしなし</Label><Label className="w-[18px]">(<u>N</u>)</Label>
      </div>
      <div className="flex h-[25px] shrink-0 items-center pl-[4px]">
        <svg width="16" height="16" viewBox="-8 -8 16 16" className="mr-[11px]">
          <path d="M0 0L-7 -2A7.400 7.400 0 0 1 -0.500 -7.400z" fill="#e97b2e" /><path d="M0.500 -0.500V-7.400A7.400 7.400 0 0 1 7 -2.200z" fill="#eabf72" />
          <path d="M1 0.500L7.200 -1.200A7.400 7.400 0 0 1 4.700 5.700z" fill="#6f9089" /><path d="M0 1L4 6.200A7.400 7.400 0 0 1 -4 6.200z" fill="#3568ae" /><path d="M-1 0.500L-7.200 -1.200A7.400 7.400 0 0 0 -4.700 5.700z" fill="#d26a52" />
        </svg>
        <Label className="w-[56px]">その他の色</Label><Label className="w-[29px]">(<u>M</u>)...</Label>
      </div>
      <div className="flex h-[24px] shrink-0 items-center pl-[5px]">
        <svg width="14" height="14" viewBox="0 0 14 14" className="mr-[12px]"><path d="M0.500 0.500h13v13H0.500z" fill="#fff" stroke="#6a6a6a" /><path d="M2 12V10l3-4 3 3 2-1 2 2v2z" fill="#3568ae" /><circle cx="9.500" cy="4" r="1.500" fill="#e9b568" /></svg>
        <Label className="w-[13px]">図</Label><Label className="w-[28px]">(<u>P</u>)...</Label>
      </div>
      <div className="flex h-[24px] shrink-0 items-center pl-[5px]">
        <div className="mr-[12px] h-[14px] w-[14px] border border-[#6a6a6a] bg-linear-to-br from-white to-[#8a8a8a]" />
        <Label className="w-[62px]">グラデーション</Label><Label className="w-[19px]">(<u>G</u>)</Label>
        <svg width="4" height="7" viewBox="0 0 4 7" className="ml-[44px]"><path d="M0 0l4 3.500L0 7z" fill="#444" /></svg>
      </div>
      <div className="flex h-[24px] shrink-0 items-center bg-[#c6c6c6] pl-[5px] text-[#333]">
        <TextureIcon />
        <Label className="ml-[12px] w-[44px]">テクスチャ</Label><Label className="w-[18px]">(<u>T</u>)</Label>
        <svg width="4" height="7" viewBox="0 0 4 7" className="ml-[63px]"><path d="M0 0l4 3.500L0 7z" fill="#444" /></svg>
      </div>
    </div>
  );
}

function TextureMenu() {
  return (
    <div className="absolute left-[631px] top-[291px] flex h-[565px] w-[373px] flex-col border border-[#c6c6c6] bg-white px-px pt-px text-[12px] text-[#555] shadow-[1px_2px_3px_rgba(0,0,0,0.18)]">
      <div className="grid w-[352px] grid-cols-4">
        {textures.map((_, i) => (
          <div key={i} className={`h-[88px] w-[88px] p-[4px] ${i === 0 ? "bg-[#c6c6c6]" : ""}`}>
            <TextureTile index={i} />
          </div>
        ))}
      </div>
      <div className="flex h-[27px] items-center border-t border-[#e1e1e1] pl-[5px]">
        <TextureIcon />
        <Label className="ml-[12px] w-[85px]">その他のテクスチャ</Label><Label className="w-[31px]">(<u>M</u>)...</Label>
      </div>
      <div className="mt-px flex justify-center gap-[3px]">
        <i className="h-[2px] w-[2px] bg-[#b0b0b8]" /><i className="h-[2px] w-[2px] bg-[#b0b0b8]" /><i className="h-[2px] w-[2px] bg-[#b0b0b8]" /><i className="h-[2px] w-[2px] bg-[#b0b0b8]" />
      </div>
    </div>
  );
}

function Annotations() {
  return (
    <svg width="1600" height="860" viewBox="0 0 1600 860" className="pointer-events-none absolute left-0 top-0 drop-shadow-[0_1px_1px_rgba(0,0,0,0.35)]">
      <g fill="none" stroke="#fb0000" strokeWidth="4">
        <ellipse cx="516" cy="72.500" rx="79" ry="18.500" />
        <ellipse cx="543" cy="348.500" rx="91.500" ry="17.500" />
        <circle cx="678" cy="334" r="57.500" />
      </g>
    </svg>
  );
}

export default function App() {
  return (
    <div className="relative flex h-[860px] w-[1600px] flex-col overflow-hidden font-['Open_Sans','Noto_Sans_CJK_JP',sans-serif] [font-feature-settings:'palt']">
      <TitleBar />
      <Ribbon />
      <Workspace />
      <StatusBar />
      <FillMenu />
      <TextureMenu />
      <Annotations />
    </div>
  );
}
